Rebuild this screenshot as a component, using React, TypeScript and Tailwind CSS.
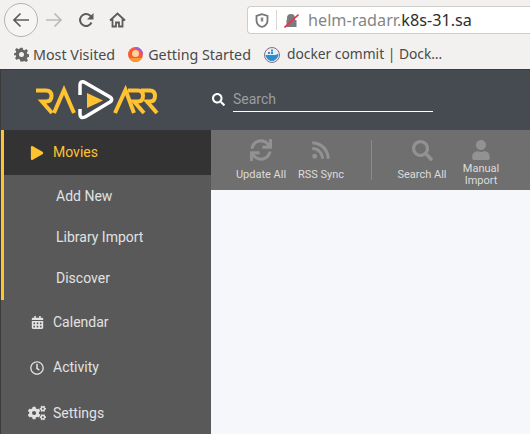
import { FaPlay, FaSync, FaRss, FaSearch, FaUser, FaCalendarAlt, FaRegClock, FaCogs } from "react-icons/fa";

const ubuntu = "font-['Noto_Sans',sans-serif]";
const roboto = "font-['Roboto',sans-serif]";

function BrowserBar() {
  return (
    <div className={`h-[70px] shrink-0 bg-[#f3f1ef] border-b-[1.5px] border-[#3b3b38] ${ubuntu}`}>
      <div className="h-[40px] flex items-start pt-[3px]">
        <div className="ml-[4px] w-[34px] h-[34px] rounded-full border border-[#b5b3b0] bg-[#f6f5f4] flex items-center justify-center">
          <svg width="18" height="16" viewBox="0 0 18 16" fill="none" stroke="#5c5c5c" strokeWidth="1.7">
            <path d="M17 8H2M8.500 1.500 2 8l6.500 6.500" />
          </svg>
        </div>
        <svg className="ml-[7px] mt-[9px]" width="18" height="16" viewBox="0 0 18 16" fill="none" stroke="#bbbab8" strokeWidth="1.7">
          <path d="M1 8h15M9.500 1.500 16 8l-6.500 6.500" />
        </svg>
        <svg className="ml-[15px] mt-[9px]" width="16" height="16" viewBox="0 0 16 16" fill="none" stroke="#5c5c5c" strokeWidth="2">
          <path d="M13.500 10.500A6 6 0 1 1 12 3.500L14 5.500" />
          <path d="M15.500 1v6.500H9z" fill="#5c5c5c" stroke="none" />
        </svg>
        <svg className="ml-[15px] mt-[9px]" width="17" height="16" viewBox="0 0 17 16" fill="none" stroke="#5c5c5c" strokeWidth="1.800">
          <path d="M1 8.500 8.500 1.500 16 8.500M3.500 7v7.500h3.500v-4h3v4h3.500V7" />
        </svg>
        <div className="ml-[121px] mt-[3px] flex-1 h-[28px] bg-white border border-[#cfcdca] border-r-0 rounded-l-[4px] flex items-center pl-[7px]">
          <svg width="14" height="15" viewBox="0 0 14 15" fill="none" stroke="#777" strokeWidth="1.800">
            <path d="M7 1.200 1.500 3v4.500C1.500 10.500 4 13 7 14c3-1 5.500-3.500 5.500-6.500V3z" />
            <path d="M7 4.500v4" strokeWidth="2.500" stroke="#8a8a8a" />
          </svg>
          <div className="ml-[7px] w-px h-[20px] bg-[#d8d6d3]" />
          <svg className="ml-[7px]" width="15" height="15" viewBox="0 0 15 15">
            <path d="M3 7V5a4 4 0 0 1 8 0v2h1.500v7h-10V7z" fill="#7b7b7b" />
            <path d="M0.500 14.500 14.500 1.500" stroke="#f0304f" strokeWidth="1.700" />
          </svg>
          <span className="ml-[9px] text-[16.200px] leading-none text-[#858585]">
            helm-radarr.<span className="text-[#2e2e2e]">k8s-31.sa</span>
          </span>
        </div>
      </div>
      <div className="h-[29px] flex items-center text-[14.300px] text-[#4a4a4a] whitespace-nowrap">
        <span className="ml-[14px] flex items-center gap-[4px]">
          <svg width="15" height="15" viewBox="0 0 24 24" fill="#666">
            <path d="M10 1h4l.6 3.200 2.300 1 2.700-1.900 2.800 2.800-1.900 2.700 1 2.300 3.200.6v4l-3.200.6-1 2.300 1.900 2.700-2.800 2.800-2.700-1.900-2.300 1L14 23h-4l-.6-3.200-2.300-1-2.700 1.900-2.800-2.800 1.900-2.700-1-2.300L-.7 14v-4l3.200-.6 1-2.300-1.900-2.700 2.800-2.800 2.700 1.900 2.300-1zM12 8a4 4 0 1 0 0 8 4 4 0 0 0 0-8z" />
          </svg>
          Most Visited
        </span>
        <span className="ml-[13px] flex items-center gap-[5px]">
          <svg width="15" height="15" viewBox="0 0 15 15">
            <circle cx="7.500" cy="7.500" r="7.500" fill="#fb5a33" />
            <path d="M7.500 0a7.500 7.500 0 0 1 7.500 7.500h-2A5 5 0 0 0 7.500 2z" fill="#9a5ce8" />
            <circle cx="7.500" cy="6.500" r="3.500" fill="#ffd0a0" />
            <path d="M1 11a7.500 7.500 0 0 0 13 0z" fill="#ff9a2a" />
          </svg>
          Getting Started
        </span>
        <span className="ml-[13px] flex items-center gap-[7px] text-[13.800px]">
          <svg width="16" height="16" viewBox="0 0 16 16">
            <circle cx="8" cy="8" r="7.500" fill="#e9eef2" stroke="#8a6d80" strokeWidth="1" />
            <path d="M1.500 8h10c1 0 1.500-1 2-1 .5 0 1 .5 1 1-1 3.500-3.500 6-6.500 6-3.500 0-5.500-2.500-6.500-6z" fill="#2a8fd0" />
            <rect x="4" y="5" width="2" height="2" fill="#2a8fd0" />
            <rect x="7" y="5" width="2" height="2" fill="#2a8fd0" />
            <rect x="7" y="2.500" width="2" height="2" fill="#2a8fd0" />
          </svg>
          docker commit | Dock…
        </span>
      </div>
    </div>
  );
}

function Logo() {
  return (
    <svg width="128" height="42" viewBox="0 0 128 42" fill="none">
      <g stroke="#ffc230" strokeWidth="4">
        <path d="M3 11.500H13Q18.500 11.500 18.500 17T13 22.500H9L19 34" />
        <path d="M21 34 31 11 41 34" />
        <path d="M82 34 92.500 11 101 34" />
        <path d="M95 11.500H105Q110 11.500 110 17T105 22.500H101L111 34" />
        <path d="M108 11.500H117Q122 11.500 122 17T117 22.500H114L124 34" />
      </g>
      <path d="M47 16V6Q47 2 51 3L77 18Q80.500 20.500 77 23L52 38Q47 40 47 35V30" stroke="#fff" strokeWidth="3.500" strokeLinejoin="round" />
      <path d="M54 14V29L70 21.500z" fill="#ffc230" />
    </svg>
  );
}

function ToolButton({ icon, label }: { icon: React.ReactNode; label: React.ReactNode }) {
  return (
    <div className="flex flex-col items-center w-full">
      <div className="h-[24px] flex items-center justify-center text-[#929292]">{icon}</div>
      <div className="h-[26px] flex items-center text-center text-[11px] leading-[12px] text-[#dcdcdc] whitespace-nowrap">{label}</div>
    </div>
  );
}

function NavItem({ icon, label }: { icon: React.ReactNode; label: string }) {
  return (
    <div className="h-[45.500px] flex items-center text-[14px] text-[#e1e2e3]">
      <div className="w-[20px] ml-[26px] flex-none flex justify-center">{icon}</div>
      <span className="ml-[6px]">{label}</span>
    </div>
  );
}

export default function App() {
  return (
    <div className={`w-[530px] h-[434px] overflow-hidden flex flex-col ${roboto}`}>
      <BrowserBar />
      <div className="flex-1 min-h-0 flex border-l border-[#3b3b38]">
        <div className="w-[210px] flex-none flex flex-col bg-[#595959]">
          <div className="h-[60px] flex-none bg-[#464b51] pl-[32px] pt-[9px]">
            <Logo />
          </div>
          <div className="border-l-[3px] border-[#ffc230] pb-[1px]">
            <div className="h-[45px] bg-[#333333] flex items-center text-[14px] text-[#ffc230]">
              <FaPlay className="ml-[26px] text-[14px]" />
              <span className="ml-[9px]">Movies</span>
            </div>
            <div className="pt-[0.500px]">
              <div className="h-[41px] flex items-center pl-[52px] text-[14px] text-[#e1e2e3]">Add New</div>
              <div className="h-[41px] flex items-center pl-[52px] text-[14px] text-[#e1e2e3]">Library Import</div>
              <div className="h-[41px] flex items-center pl-[52px] text-[14px] text-[#e1e2e3]">Discover</div>
            </div>
          </div>
          <div>
            <NavItem icon={<FaCalendarAlt className="text-[13px]" />} label="Calendar" />
            <NavItem icon={<FaRegClock className="text-[14px]" />} label="Activity" />
            <NavItem icon={<FaCogs className="text-[18px]" />} label="Settings" />
          </div>
        </div>
        <div className="flex-1 min-w-0 flex flex-col bg-[#f5f7fa]">
          <div className="h-[60px] flex-none bg-[#464b51] flex items-start pt-[16px]">
            <FaSearch className="text-white text-[13px] mt-[7px] ml-[1px]" />
            <div className="ml-[8px] w-[200px] h-[26px] border-b border-white text-[14px] leading-[26px] text-[#9b9da0]">Search</div>
          </div>
          <div className="h-[60px] flex-none bg-[#6f6f6f] flex items-start pt-[8px]">
            <div className="w-[50px] ml-[25px] flex-none"><ToolButton icon={<FaSync className="text-[22px]" />} label="Update All" /></div>
            <div className="w-[50px] ml-[10px] flex-none"><ToolButton icon={<FaRss className="text-[20px]" />} label="RSS Sync" /></div>
            <div className="ml-[25px] mt-[2px] w-px h-[40px] bg-[#8a8a8a] flex-none" />
            <div className="w-[56px] ml-[22px] flex-none"><ToolButton icon={<FaSearch className="text-[21px]" />} label="Search All" /></div>
            <div className="w-[50px] ml-[6px] flex-none"><ToolButton icon={<FaUser className="text-[20px]" />} label={<span>Manual<br />Import</span>} /></div>
          </div>
        </div>
      </div>
    </div>
  );
}
